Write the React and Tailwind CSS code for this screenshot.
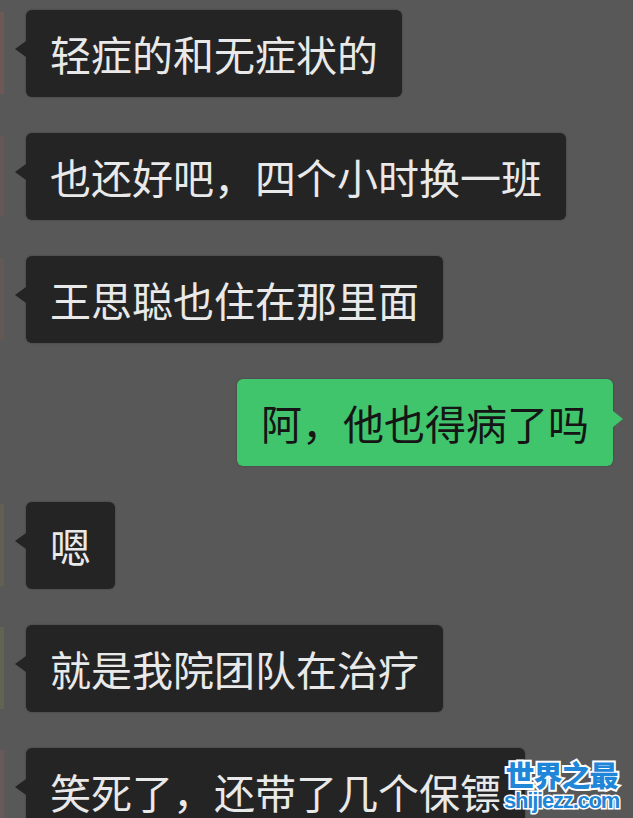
import React from "react";

const messages = [
	{ text: "轻症的和无症状的", avatar: "bg-[#7a5a55]" },
	{ text: "也还好吧，四个小时换一班", avatar: "bg-[#6e5658]" },
	{ text: "王思聪也住在那里面", avatar: "bg-[#6a5a52]" },
	{ text: "阿，他也得病了吗", mine: true },
	{ text: "嗯", avatar: "bg-[#6a6450]" },
	{ text: "就是我院团队在治疗", avatar: "bg-[#6b6a4e]" },
	{ text: "笑死了，还带了几个保镖", avatar: "bg-[#735a5c]" },
];

function Bubble({ text, mine }) {
	return (
		<div
			className={
				"relative h-[87px] flex items-center px-6 rounded-[6px] text-[41px] leading-none whitespace-nowrap shadow-[0_0_2px_rgba(0,0,0,0.35)] " +
				(mine ? "bg-[#40c46c] text-[#151515]" : "bg-[#242424] text-[#e9e9e9]")
			}
		>
			{/* little tail pointing at the avatar */}
			{mine ? (
				<span className="absolute top-[32px] -right-[10px] w-0 h-0 border-y-[8px] border-y-transparent border-l-[10px] border-l-[#40c46c]" />
			) : (
				<span className="absolute top-[31px] -left-[11px] w-0 h-0 border-y-[8px] border-y-transparent border-r-[11px] border-r-[#242424]" />
			)}
			{text}
		</div>
	);
}

export default function App() {
	return (
		<div
			className="relative w-[633px] h-[818px] overflow-hidden bg-[#585858] pt-[10px] flex flex-col gap-[36px]"
			style={{ fontFamily: '"Noto Sans CJK SC", "Noto Sans", sans-serif' }}
		>
			{messages.map((m, i) =>
				m.mine ? (
					<div key={i} className="flex justify-end pr-[20px] shrink-0">
						<Bubble text={m.text} mine />
					</div>
				) : (
					<div key={i} className="flex items-start shrink-0">
						<div className={"w-[4px] h-[82px] mt-[2px] opacity-60 " + m.avatar} />
						<div className="ml-[22px]">
							<Bubble text={m.text} />
						</div>
					</div>
				)
			)}

			{/* watermark */}
			<div className="absolute left-[504px] top-[760px] flex flex-col items-center leading-none">
				<span
					className="text-[29px] font-black tracking-[-1px] text-[#1f86d8] [paint-order:stroke_fill] [-webkit-text-stroke:4px_#ffffff]"
					style={{ fontFamily: '"Noto Sans CJK SC", sans-serif' }}
				>
					世界之最
				</span>
				<span
					className="mt-[1px] text-[22px] font-bold tracking-[-1.2px] text-[#1f86d8] [paint-order:stroke_fill] [-webkit-text-stroke:3px_#ffffff]"
					style={{ fontFamily: '"Liberation Sans", Arial, sans-serif' }}
				>
					shijiezz.com
				</span>
			</div>
		</div>
	);
}
